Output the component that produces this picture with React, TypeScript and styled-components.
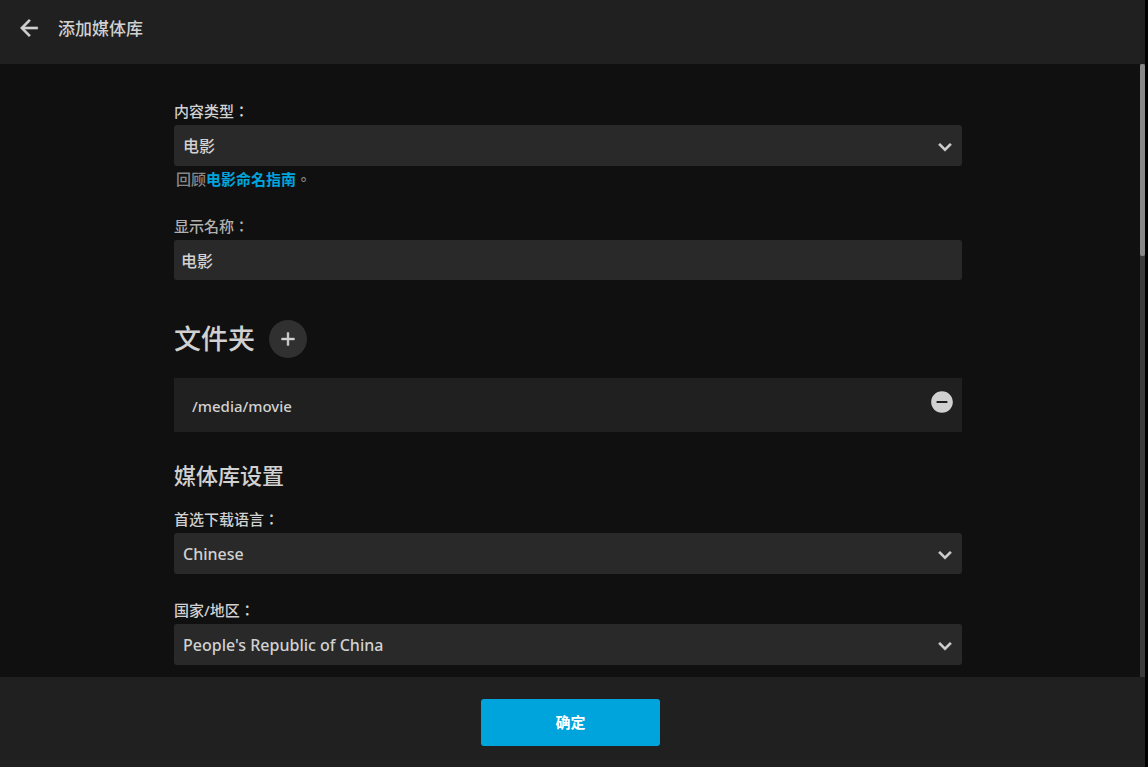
import React, { useState } from "react";
import styled, { createGlobalStyle } from "styled-components";
import { MdAdd, MdArrowBack, MdExpandMore, MdRemoveCircle } from "react-icons/md";

const GlobalStyle = createGlobalStyle`
  * { box-sizing: border-box; }
  html { background: #000; }
  body {
    margin: 0;
    background: #000;
    color: #d1d1d1;
    font-family: "Noto Sans", "Noto Sans CJK TC", sans-serif;
    font-size: 15px;
    font-weight: 500;
  }
  button, input, select { font-family: inherit; }
  svg path[fill="none"] { stroke: none; }
`;

const Dialog = styled.div`
  display: flex;
  flex-direction: column;
  height: 100vh;
  margin-right: 3px;
  background: #101010;
`;

const Header = styled.header`
  display: flex;
  flex: none;
  align-items: center;
  gap: 10px;
  height: 64px;
  padding: 0 10px 8px;
  background: #202020;
`;

const IconButton = styled.button<{ $filled?: boolean; $bold?: boolean; $height?: number }>`
  display: flex;
  flex: none;
  align-items: center;
  justify-content: center;
  width: 38px;
  height: ${(p) => p.$height ?? 38}px;
  padding: 0;
  border: 0;
  border-radius: 50%;
  background: ${(p) => (p.$filled ? "#303030" : "transparent")};
  color: #d1d1d1;
  cursor: pointer;

  svg {
    stroke-width: ${(p) => (p.$bold ? 0.5 : 0)};
  }
`;

const Title = styled.h1`
  margin: 0;
  padding-top: 2px;
  font-size: 17px;
  font-weight: 500;
  line-height: 24px;
`;

const Body = styled.div`
  display: flex;
  flex: 1;
  min-height: 0;
`;

const Scroller = styled.main`
  flex: 1;
  min-width: 0;
  overflow-y: auto;
  padding: 37px 4px 40px 0;
  scrollbar-width: none;
`;

const Track = styled.div`
  flex: none;
  width: 5px;
  background: #3b3b3b;
`;

const Thumb = styled.div`
  height: 192px;
  border-radius: 2px;
  background: #888;
`;

const Form = styled.form`
  width: 100%;
  max-width: 788px;
  margin: 0 auto;
`;

const Field = styled.div`
  margin-bottom: 26px;
`;

const Label = styled.label<{ $dim?: boolean }>`
  display: block;
  margin-bottom: 4px;
  color: ${(p) => (p.$dim ? "#b0b0b0" : "#d1d1d1")};
  line-height: 20px;
`;

const SelectBox = styled.div`
  position: relative;

  svg {
    position: absolute;
    top: 9px;
    right: 4px;
    stroke-width: 0.5;
    pointer-events: none;
  }
`;

const Select = styled.select`
  display: block;
  width: 100%;
  height: 41px;
  padding: 0 40px 0 9px;
  border: 0;
  border-radius: 3px;
  background: #292929;
  color: #d1d1d1;
  font-size: 16px;
  font-weight: 500;
  appearance: none;
`;

const TextInput = styled.input`
  display: block;
  width: 100%;
  height: 40px;
  padding: 0 7px;
  border: 0;
  border-radius: 3px;
  background: #292929;
  color: #d1d1d1;
  font-size: 16px;
  font-weight: 500;
`;

const Help = styled.p`
  margin: 3px 2px 27px;
  color: #888;
  line-height: 20px;
`;

const Link = styled.a`
  color: #00a4dc;
  font-weight: 600;
  text-decoration: none;
`;

const FolderHeading = styled.div`
  display: flex;
  align-items: center;
  gap: 14px;
  margin: 40px 0 20px;
`;

const Heading = styled.h2<{ $large?: boolean }>`
  margin: ${(p) => (p.$large ? "0" : "27px 0 18px")};
  font-size: ${(p) => (p.$large ? 27 : 22)}px;
  font-weight: 500;
  line-height: 32px;
`;

const FolderRow = styled.div`
  display: flex;
  align-items: flex-start;
  justify-content: space-between;
  padding: 11px 1px 9px 18px;
  background: #202020;
  line-height: 34px;
`;

const Footer = styled.footer`
  display: flex;
  flex: none;
  justify-content: center;
  padding: 22px 4px 21px 0;
  background: #202020;
`;

const Submit = styled.button`
  width: 179px;
  height: 47px;
  padding: 0 0 2px;
  border: 0;
  border-radius: 3px;
  background: #00a4dc;
  color: #fff;
  font-size: 15px;
  font-weight: 600;
  cursor: pointer;
`;

type SelectFieldProps = {
  id: string;
  label: string;
  options: string[];
  children?: React.ReactNode;
};

function SelectField({ id, label, options, children }: SelectFieldProps) {
  return (
    <Field>
      <Label htmlFor={id}>{label}</Label>
      <SelectBox>
        <Select id={id}>
          {options.map((option) => (
            <option key={option}>{option}</option>
          ))}
        </Select>
        <MdExpandMore size={26} />
      </SelectBox>
      {children}
    </Field>
  );
}

export default function App() {
  const [name, setName] = useState("电影");

  return (
    <>
      <GlobalStyle />
      <Dialog lang="zh-Hant">
        <Header>
          <IconButton type="button" $bold aria-label="返回">
            <MdArrowBack size={26} />
          </IconButton>
          <Title>添加媒体库</Title>
        </Header>
        <Body>
          <Scroller>
            <Form id="library" onSubmit={(e) => e.preventDefault()}>
              <SelectField id="type" label="内容类型：" options={["电影"]}>
                <Help>
                  回顾<Link href="#naming">电影命名指南</Link>。
                </Help>
              </SelectField>
              <Field>
                <Label htmlFor="name" $dim>显示名称：</Label>
                <TextInput id="name" value={name} onChange={(e) => setName(e.target.value)} />
              </Field>
              <FolderHeading>
                <Heading $large>文件夹</Heading>
                <IconButton type="button" $filled $bold aria-label="添加">
                  <MdAdd size={22} />
                </IconButton>
              </FolderHeading>
              <FolderRow>
                <span>/media/movie</span>
                <IconButton type="button" $height={26} aria-label="移除">
                  <MdRemoveCircle size={26} />
                </IconButton>
              </FolderRow>
              <Heading>媒体库设置</Heading>
              <SelectField id="language" label="首选下载语言：" options={["Chinese"]} />
              <SelectField id="country" label="国家/地区：" options={["People's Republic of China"]} />
            </Form>
          </Scroller>
          <Track>
            <Thumb />
          </Track>
        </Body>
        <Footer>
          <Submit type="submit" form="library">确定</Submit>
        </Footer>
      </Dialog>
    </>
  );
}
